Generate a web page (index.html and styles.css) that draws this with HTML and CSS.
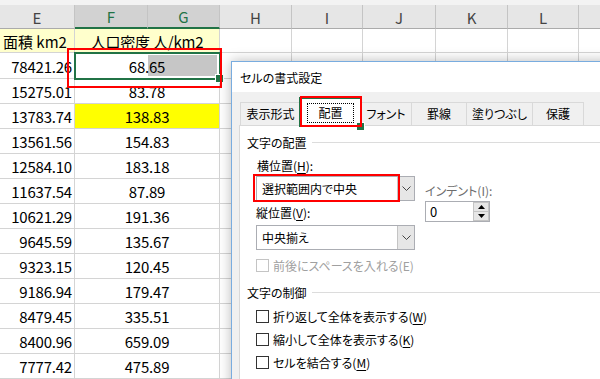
FILE: index.html
```html
<!DOCTYPE html>
<html lang="ja">
<head>
<meta charset="utf-8">
<title>セルの書式設定</title>
<link rel="stylesheet" href="styles.css">
</head>
<body>
<div class="app">
  <div class="topstrip"></div>
  <div class="sheet">
    <div class="ch">E</div>
    <div class="ch sel">F</div>
    <div class="ch sel">G</div>
    <div class="ch">H</div>
    <div class="ch">I</div>
    <div class="ch">J</div>
    <div class="ch">K</div>
    <div class="ch">L</div>
    <div class="ch"></div>

    <div class="c txt lt">面積 km2</div>
    <div class="c mid lt">人口密度 人/km2</div>
    <div class="c"></div><div class="c"></div><div class="c"></div><div class="c"></div><div class="c"></div><div class="c"></div>

    <div class="c num">78421.26</div>
    <div class="c mid active">68.65</div>
    <div class="c"></div><div class="c"></div><div class="c"></div><div class="c"></div><div class="c"></div><div class="c"></div>

    <div class="c num">15275.01</div><div class="c mid">83.78</div>
    <div class="c"></div><div class="c"></div><div class="c"></div><div class="c"></div><div class="c"></div><div class="c"></div>

    <div class="c num">13783.74</div><div class="c mid yl">138.83</div>
    <div class="c"></div><div class="c"></div><div class="c"></div><div class="c"></div><div class="c"></div><div class="c"></div>

    <div class="c num">13561.56</div><div class="c mid">154.83</div>
    <div class="c"></div><div class="c"></div><div class="c"></div><div class="c"></div><div class="c"></div><div class="c"></div>

    <div class="c num">12584.10</div><div class="c mid">183.18</div>
    <div class="c"></div><div class="c"></div><div class="c"></div><div class="c"></div><div class="c"></div><div class="c"></div>

    <div class="c num">11637.54</div><div class="c mid">87.89</div>
    <div class="c"></div><div class="c"></div><div class="c"></div><div class="c"></div><div class="c"></div><div class="c"></div>

    <div class="c num">10621.29</div><div class="c mid">191.36</div>
    <div class="c"></div><div class="c"></div><div class="c"></div><div class="c"></div><div class="c"></div><div class="c"></div>

    <div class="c num">9645.59</div><div class="c mid">135.67</div>
    <div class="c"></div><div class="c"></div><div class="c"></div><div class="c"></div><div class="c"></div><div class="c"></div>

    <div class="c num">9323.15</div><div class="c mid">120.45</div>
    <div class="c"></div><div class="c"></div><div class="c"></div><div class="c"></div><div class="c"></div><div class="c"></div>

    <div class="c num">9186.94</div><div class="c mid">179.47</div>
    <div class="c"></div><div class="c"></div><div class="c"></div><div class="c"></div><div class="c"></div><div class="c"></div>

    <div class="c num">8479.45</div><div class="c mid">335.51</div>
    <div class="c"></div><div class="c"></div><div class="c"></div><div class="c"></div><div class="c"></div><div class="c"></div>

    <div class="c num">8400.96</div><div class="c mid">659.09</div>
    <div class="c"></div><div class="c"></div><div class="c"></div><div class="c"></div><div class="c"></div><div class="c"></div>

    <div class="c num">7777.42</div><div class="c mid">475.89</div>
    <div class="c"></div><div class="c"></div><div class="c"></div><div class="c"></div><div class="c"></div><div class="c"></div>
  </div>

  <div class="redmark cellmark"></div>

  <div class="dialog">
    <div class="title">セルの書式設定</div>
    <div class="dbody">
      <div class="tabs">
        <div class="tab w1">表示形式</div>
        <div class="tab active w2"><span class="focus">配置</span><span class="redmark tabmark"></span></div>
        <div class="tab w3">フォント</div>
        <div class="tab w4">罫線</div>
        <div class="tab w5">塗りつぶし</div>
        <div class="tab w6">保護</div>
      </div>
      <div class="panel">
        <div class="group"><span>文字の配置</span><i class="rule"></i></div>
        <div class="sub">
          <div class="lbl first">横位置(<u>H</u>):</div>
          <div class="cols">
            <div class="left">
              <div class="combo c1">
                <span class="val">選択範囲内で中央</span>
                <span class="btn"><svg width="9" height="5" viewBox="0 0 9 5"><polyline points="0.5,0.5 4.5,4.5 8.5,0.5" fill="none" stroke="#444" stroke-width="1"/></svg></span>
                <span class="redmark combomark"></span>
              </div>
              <div class="lbl l2">縦位置(<u>V</u>):</div>
              <div class="combo c2">
                <span class="val">中央揃え</span>
                <span class="btn"><svg width="9" height="5" viewBox="0 0 9 5"><polyline points="0.5,0.5 4.5,4.5 8.5,0.5" fill="none" stroke="#444" stroke-width="1"/></svg></span>
              </div>
            </div>
            <div class="right">
              <div class="lbl dis">インデント(I):</div>
              <div class="spin">
                <span class="val">0</span>
                <span class="arrows">
                  <span class="arr"><svg width="7" height="4" viewBox="0 0 7 4"><polygon points="0,4 3.5,0 7,4" fill="#000"/></svg></span>
                  <span class="arr"><svg width="7" height="4" viewBox="0 0 7 4"><polygon points="0,0 3.5,4 7,0" fill="#000"/></svg></span>
                </span>
              </div>
            </div>
          </div>
          <div class="chk dis first-chk"><i class="box"></i><span>前後にスペースを入れる(E)</span></div>
        </div>
        <div class="group g2"><span>文字の制御</span><i class="rule"></i></div>
        <div class="sub">
          <div class="chk c-a"><i class="box"></i><span>折り返して全体を表示する(<u>W</u>)</span></div>
          <div class="chk"><i class="box"></i><span>縮小して全体を表示する(<u>K</u>)</span></div>
          <div class="chk"><i class="box"></i><span>セルを結合する(<u>M</u>)</span></div>
        </div>
      </div>
    </div>
  </div>
</div>
</body>
</html>
```

FILE: styles.css
```css
* { box-sizing: border-box; }
html, body { margin: 0; padding: 0; }
body {
  width: 600px;
  height: 379px;
  overflow: hidden;
  background: #fff;
  font-family: "Noto Sans CJK JP", "Noto Sans", sans-serif;
  color: #000;
}
.app {
  position: relative;
  width: 600px;
  height: 379px;
  overflow: hidden;
}
.topstrip {
  height: 5px;
  background: #f3f3f3;
}
.sheet {
  display: grid;
  grid-template-columns: 75px 73px 72px 72px 71px 73px 72px 71px 40px;
  grid-template-rows: 24px 24px 26px repeat(12, 25px);
  font-size: 15px;
}
.ch {
  background: #e6e6e6;
  border-right: 1px solid #c4c4c4;
  border-bottom: 1px solid #ababab;
  color: #444;
  display: flex;
  align-items: center;
  justify-content: center;
  font-family: "Noto Sans CJK JP", sans-serif;
  font-size: 15px;
  line-height: 1;
  padding-top: 1px;
}
.ch.sel {
  background: #d2d2d2;
  color: #217346;
  border-bottom: 2px solid #217346;
}
.c {
  border-right: 1px solid #d4d4d4;
  border-bottom: 1px solid #d4d4d4;
  display: flex;
  align-items: center;
  line-height: 1;
  padding-top: 1px;
  white-space: nowrap;
  position: relative;
}
.num { justify-content: flex-end; padding-right: 2px; letter-spacing: -0.2px; }
.txt { justify-content: flex-start; padding-left: 3px; }
.mid { grid-column: span 2; justify-content: center; letter-spacing: -0.2px; }
.lt { background: #ffffcc; }
.yl { background: #ffff00; }
.active {
  outline: 2px solid #217346;
  outline-offset: -1px;
  background: #fff linear-gradient(#c6c6c6, #c6c6c6) no-repeat;
  background-size: 69px 21px;
  background-position: 73px 2px;
  z-index: 2;
}
.active::after {
  content: "";
  position: absolute;
  right: -5px;
  bottom: -5px;
  width: 7px;
  height: 7px;
  background: #217346;
  border: 1px solid #fff;
}

.redmark {
  position: absolute;
  border: 2px solid #ff0000;
  pointer-events: none;
  z-index: 5;
}
.cellmark { left: 67px; top: 48px; width: 155px; height: 40px; }

/* dialog */
.dialog {
  position: absolute;
  left: 231px;
  top: 61px;
  width: 400px;
  height: 340px;
  border: 1px solid #79acdf;
  background: #f0f0f0;
  box-shadow: 0 0 12px rgba(0, 0, 0, 0.28);
  font-size: 12px;
  font-feature-settings: "palt";
  z-index: 10;
  display: flex;
  flex-direction: column;
}
.title {
  height: 30px;
  background: #fff;
  display: flex;
  align-items: center;
  padding-left: 8px;
  padding-top: 1px;
  font-size: 12px;
}
.dbody {
  flex: 1;
  padding: 5px 0 0 7px;
  display: flex;
  flex-direction: column;
}
.tabs {
  display: flex;
  align-items: flex-end;
  height: 28px;
  padding-left: 1px;
  position: relative;
  z-index: 2;
}
.tab {
  height: 23px;
  border: 1px solid #d9d9d9;
  border-bottom: none;
  background: #f0f0f0;
  display: flex;
  align-items: center;
  justify-content: center;
  margin-left: -1px;
  position: relative;
  line-height: 1;
}
.tab.w1 { margin-left: 0; width: 61px; }
.tab.w2 { width: 61px; }
.tab.w3 { width: 52px; }
.tab.w4 { width: 56px; }
.tab.w5 { width: 67px; }
.tab.w6 { width: 52px; }
.tab.active {
  height: 28px;
  margin-bottom: -1px;
  background: #fff;
  z-index: 3;
  padding-top: 1px;
}
.focus {
  display: flex;
  align-items: center;
  justify-content: center;
  width: 47px;
  height: 20px;
  border: 1px dotted #000;
}
.tabmark { top: -3px; left: -1px; right: -2px; bottom: -1px; }

.panel {
  flex: 1;
  background: #fff;
  border: 1px solid #d9d9d9;
  padding: 7px 0 0 7px;
}
.group {
  display: flex;
  align-items: center;
  height: 18px;
  gap: 5px;
}
.group .rule {
  flex: 1;
  height: 1px;
  background: #dcdcdc;
}
.g2 { margin-top: 9px; }
.sub { padding-left: 9px; }
.lbl { height: 18px; line-height: 18px; }
.lbl.first { margin-top: 6px; padding-left: 1px; }
.lbl.l2 { margin-top: 3px; }
.lbl.dis { color: #6d6d6d; }
.cols { display: flex; gap: 10px; }
.left { width: 159px; }
.right { padding-top: 7px; }
.combo {
  position: relative;
  height: 25px;
  margin-top: 1px;
  border: 1px solid #abadb3;
  background: #fff;
  display: flex;
  align-items: stretch;
}
.combo.c2 { margin-top: 3px; }
.combo .val {
  flex: 1;
  display: flex;
  align-items: center;
  padding-left: 5px;
}
.combo .btn {
  width: 17px;
  background: #e6e6e6;
  border-left: 1px solid #c4c4c4;
  display: flex;
  align-items: center;
  justify-content: center;
}
.combomark { left: -4px; top: -3px; width: 147px; height: 28px; }
.spin {
  margin-top: 1px;
  width: 65px;
  height: 21px;
  border: 1px solid #abadb3;
  background: #fff;
  display: flex;
}
.spin .val { flex: 1; display: flex; align-items: center; padding-left: 4px; font-size: 13px; }
.arrows { width: 16px; display: flex; flex-direction: column; }
.arr {
  flex: 1;
  background: #e6e6e6;
  border: 1px solid #c4c4c4;
  display: flex;
  align-items: center;
  justify-content: center;
}
.arr + .arr { border-top: none; }
.chk {
  display: flex;
  align-items: center;
  height: 18px;
  margin-top: 5px;
  gap: 4px;
}
.chk .box {
  width: 13px;
  height: 13px;
  border: 1px solid #333;
  background: #fff;
}
.chk.dis { color: #a0a0a0; }
.chk.dis .box { border-color: #c4c4c4; }
.first-chk { margin-top: 6px; }
.c-a { margin-top: 6px; }
u { text-decoration-thickness: 1px; text-underline-offset: 2px; }
```
